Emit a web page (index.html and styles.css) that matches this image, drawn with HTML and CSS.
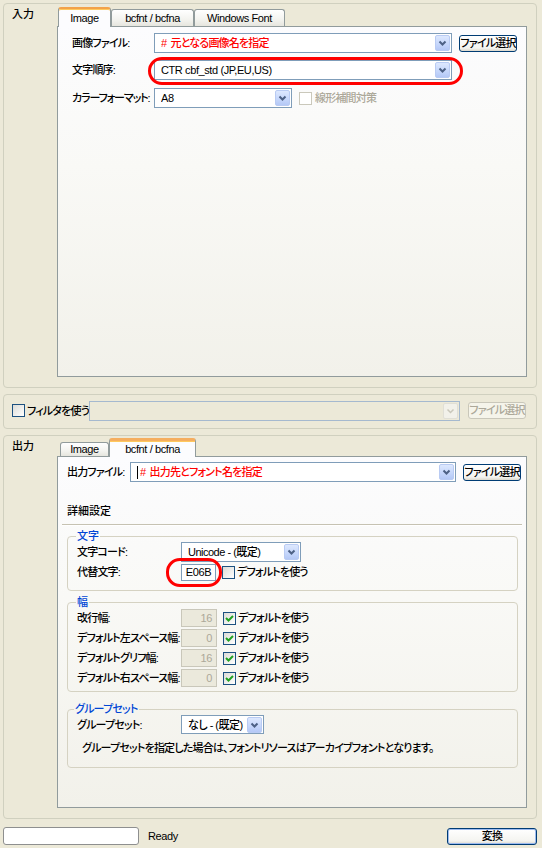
FILE: index.html
```html
<!DOCTYPE html>
<html lang="ja">
<head>
<meta charset="utf-8">
<title>Font Converter</title>
<link rel="stylesheet" href="styles.css">
</head>
<body>
<div class="app">
  <section class="box box-input">
    <div class="box-label">入力</div>
    <div class="tabctl">
      <div class="tabs tabs-in">
        <div class="tab active lat t-in-img">Image</div>
        <div class="tab lat t-in-bcf">bcfnt / bcfna</div>
        <div class="tab lat t-in-win">Windows Font</div>
      </div>
      <div class="panel panel-in">
        <div class="row r1">
          <span class="lbl lbl-in">画像ファイル:</span>
          <div class="combo cw-in"><span class="ct red"># 元となる画像名を指定</span><span class="cbtn"><svg viewBox="0 0 13 14" width="13" height="14"><path d="M3.5 5.5 L6.5 8.5 L9.5 5.5" fill="none" stroke="#4D6185" stroke-width="2"/></svg></span></div>
          <div class="btn">ファイル選択</div>
        </div>
        <div class="row r2">
          <span class="lbl lbl-in">文字順序:</span>
          <div class="ring-host">
            <div class="combo cw-in"><span class="ct lat">CTR cbf_std (JP,EU,US)</span><span class="cbtn"><svg viewBox="0 0 13 14" width="13" height="14"><path d="M3.5 5.5 L6.5 8.5 L9.5 5.5" fill="none" stroke="#4D6185" stroke-width="2"/></svg></span></div>
            <span class="ring ring-order"></span>
          </div>
        </div>
        <div class="row r3">
          <span class="lbl lbl-in lbl-tight">カラーフォーマット:</span>
          <div class="combo cw-fmt"><span class="ct lat">A8</span><span class="cbtn"><svg viewBox="0 0 13 14" width="13" height="14"><path d="M3.5 5.5 L6.5 8.5 L9.5 5.5" fill="none" stroke="#4D6185" stroke-width="2"/></svg></span></div>
          <span class="chk dis chk-lin"></span>
          <span class="dis-text">線形補間対策</span>
        </div>
      </div>
    </div>
  </section>

  <section class="box box-filter">
    <span class="chk"></span>
    <span class="filter-lbl">フィルタを使う</span>
    <div class="combo combo-dis cw-filter"><span class="ct"></span><span class="cbtn dis-btn"><svg viewBox="0 0 13 14" width="13" height="14"><path d="M3.5 5.5 L6.5 8.5 L9.5 5.5" fill="none" stroke="#C9C7BA" stroke-width="1.5"/></svg></span></div>
    <div class="btn btn-dis">ファイル選択</div>
  </section>

  <section class="box box-output">
    <div class="box-label">出力</div>
    <div class="tabctl">
      <div class="tabs tabs-out">
        <div class="tab lat t-out-img">Image</div>
        <div class="tab active lat t-out-bcf">bcfnt / bcfna</div>
      </div>
      <div class="panel panel-out">
        <div class="row">
          <span class="lbl lbl-out">出力ファイル:</span>
          <div class="combo cw-out"><span class="caret"></span><span class="ct red"># 出力先とフォント名を指定</span><span class="cbtn"><svg viewBox="0 0 13 14" width="13" height="14"><path d="M3.5 5.5 L6.5 8.5 L9.5 5.5" fill="none" stroke="#4D6185" stroke-width="2"/></svg></span></div>
          <div class="btn">ファイル選択</div>
        </div>
        <div class="heading">詳細設定</div>
        <div class="sep"></div>

        <fieldset class="grp grp-char">
          <legend>文字</legend>
          <div class="grow">
            <span class="glbl">文字コード:</span>
            <div class="combo cw-code"><span class="ct mix">Unicode - (既定)</span><span class="cbtn"><svg viewBox="0 0 13 14" width="13" height="14"><path d="M3.5 5.5 L6.5 8.5 L9.5 5.5" fill="none" stroke="#4D6185" stroke-width="2"/></svg></span></div>
          </div>
          <div class="grow">
            <span class="glbl">代替文字:</span>
            <div class="ring-host">
              <span class="tbox tbox-alt lat">E06B</span>
              <span class="ring ring-alt"></span>
            </div>
            <span class="chk chk-gap"></span>
            <span class="chk-text">デフォルトを使う</span>
          </div>
        </fieldset>

        <fieldset class="grp grp-width">
          <legend>幅</legend>
          <div class="grow">
            <span class="glbl">改行幅:</span>
            <span class="tbox tbox-dis lat">16</span>
            <span class="chk chk-gap checked"><svg viewBox="0 0 11 11" width="11" height="11"><path d="M2 5 L4.5 7.5 L9 3" fill="none" stroke="#21A121" stroke-width="2"/></svg></span>
            <span class="chk-text">デフォルトを使う</span>
          </div>
          <div class="grow">
            <span class="glbl">デフォルト左スペース幅:</span>
            <span class="tbox tbox-dis lat">0</span>
            <span class="chk chk-gap checked"><svg viewBox="0 0 11 11" width="11" height="11"><path d="M2 5 L4.5 7.5 L9 3" fill="none" stroke="#21A121" stroke-width="2"/></svg></span>
            <span class="chk-text">デフォルトを使う</span>
          </div>
          <div class="grow">
            <span class="glbl">デフォルトグリフ幅:</span>
            <span class="tbox tbox-dis lat">16</span>
            <span class="chk chk-gap checked"><svg viewBox="0 0 11 11" width="11" height="11"><path d="M2 5 L4.5 7.5 L9 3" fill="none" stroke="#21A121" stroke-width="2"/></svg></span>
            <span class="chk-text">デフォルトを使う</span>
          </div>
          <div class="grow">
            <span class="glbl">デフォルト右スペース幅:</span>
            <span class="tbox tbox-dis lat">0</span>
            <span class="chk chk-gap checked"><svg viewBox="0 0 11 11" width="11" height="11"><path d="M2 5 L4.5 7.5 L9 3" fill="none" stroke="#21A121" stroke-width="2"/></svg></span>
            <span class="chk-text">デフォルトを使う</span>
          </div>
        </fieldset>

        <fieldset class="grp grp-set">
          <legend>グループセット</legend>
          <div class="grow grow-set">
            <span class="glbl">グループセット:</span>
            <div class="combo cw-set"><span class="ct mix">なし - (既定)</span><span class="cbtn"><svg viewBox="0 0 13 14" width="13" height="14"><path d="M3.5 5.5 L6.5 8.5 L9.5 5.5" fill="none" stroke="#4D6185" stroke-width="2"/></svg></span></div>
          </div>
          <div class="note">グループセットを指定した場合は、フォントリソースはアーカイブフォントとなります。</div>
        </fieldset>
      </div>
    </div>
  </section>

  <footer class="status">
    <span class="progress"></span>
    <span class="ready lat">Ready</span>
    <div class="btn btn-default">変換</div>
  </footer>
</div>
</body>
</html>
```

FILE: styles.css
```css
* { box-sizing: border-box; }
html, body { margin: 0; padding: 0; }
body {
  width: 542px;
  height: 848px;
  overflow: hidden;
  background: #ECE9D8;
  font-family: "Liberation Sans", "Noto Sans CJK JP", sans-serif;
  font-size: 11px;
  font-weight: 500;
  line-height: 14px;
  color: #000;
  font-feature-settings: "palt";
  letter-spacing: -0.8px;
}
.lat { letter-spacing: -0.4px; }
.mix { letter-spacing: -0.5px; }
.app { padding: 3px 0 0 3px; width: 537px; }

/* group sections */
.box {
  width: 534px;
  border: 1px solid #D0D0BF;
  border-radius: 4px;
  display: flex;
}
.box-input { height: 385px; padding: 3px 9px 10px 0; }
.box-output { height: 384px; padding: 2px 9px 10px 0; margin-top: 6px; }
.box-label { width: 53px; flex: none; padding-left: 8px; letter-spacing: 0; }
.box-output .box-label { padding-top: 1px; }

/* tab control */
.tabctl { flex: 1; display: flex; flex-direction: column; min-width: 0; }
.tabs { display: flex; align-items: flex-end; position: relative; z-index: 2; }
.tabs-in { height: 19px; padding-left: 1px; }
.tabs-out { height: 18px; padding-left: 3px; }
.tab {
  height: 17px;
  border: 1px solid #919B9C;
  border-bottom: none;
  border-radius: 3px 3px 0 0;
  background: linear-gradient(#FFFFFF, #F3F3EF 60%, #E6E5DE);
  text-align: center;
  line-height: 15px;
  padding-top: 1px;
}
.tabs-out .tab { height: 14px; line-height: 13px; padding-top: 0; }
.tab.active {
  height: 20px;
  margin-bottom: -1px;
  background: #FCFCFE;
  border-top: 2px solid #F2A24A;
  box-shadow: inset 0 1px 0 #FFC95E;
  line-height: 16px;
}
.tabs-out .tab.active { height: 19px; line-height: 16px; padding-top: 0; border-top: 3px solid #F5AE60; }
.t-in-img { width: 53px; }
.t-in-bcf { width: 83px; }
.t-in-win { width: 91px; }
.t-out-img { width: 49px; }
.t-out-bcf { width: 87px; }

.panel {
  flex: 1;
  border: 1px solid #919B9C;
  background: linear-gradient(#FCFCFE, #F9F9F6 40%, #F2F1EA);
  position: relative;
  z-index: 1;
}
.panel-in { padding: 6px 8px 0 14px; }
.panel-out { padding: 5px 8px 0 9px; }

.row { display: flex; align-items: center; height: 20px; }
.r2 { margin-top: 7px; }
.r3 { margin-top: 8px; }
.lbl { flex: none; white-space: nowrap; overflow: hidden; }
.lbl-in { width: 82px; }
.lbl-out { width: 63px; }
.lbl-tight { letter-spacing: -1.1px; }

/* combo box */
.combo {
  flex: none;
  height: 20px;
  border: 1px solid #7F9DB9;
  background: #fff;
  display: flex;
  align-items: center;
  padding: 0 1px 0 6px;
}
.ct { flex: 1; white-space: nowrap; overflow: hidden; }
.red { color: #FF0000; word-spacing: 2px; }
.caret { width: 1px; height: 13px; background: #000; margin-right: 2px; flex: none; }
.cbtn {
  flex: none;
  width: 15px;
  height: 16px;
  border: 1px solid #B9CBF3;
  border-radius: 2px;
  background: linear-gradient(#DDE8FE, #C5D6FB 60%, #B4C8F6);
  display: flex;
  align-items: center;
  justify-content: center;
}
.cw-in { width: 298px; }
.cw-fmt { width: 138px; }
.cw-out { width: 326px; padding-left: 6px; }
.cw-code { width: 120px; }
.cw-set { width: 83px; height: 19px; }
.cw-filter { width: 371px; }
.combo-dis { background: #ECE9D8; border-color: #A5B9CF; }
.cbtn.dis-btn { background: #F2F1EA; border-color: #E0DFD6; }

/* buttons */
.btn {
  flex: none;
  width: 58px;
  height: 17px;
  margin-left: 7px;
  border: 1px solid #003C74;
  border-radius: 3px;
  background: linear-gradient(#FFFFFF, #F4F4F0 80%, #DCD8CC);
  text-align: center;
  line-height: 15px;
  white-space: nowrap;
}
.btn-dis { border-color: #C9C7BA; color: #ACA899; background: #F5F4EA; margin-left: 8px; }
.btn-default {
  width: 90px;
  margin-left: auto;
  box-shadow: inset 0 0 0 1px #9DBBF0;
}

/* checkbox */
.chk {
  flex: none;
  width: 13px;
  height: 13px;
  border: 1px solid #1C5180;
  background: linear-gradient(135deg, #DCDCD7, #FFFFFF);
  display: inline-flex;
  align-items: center;
  justify-content: center;
}
.chk.dis { border-color: #CAC8BB; background: #fff; }
.chk-lin { margin-left: 7px; }
.dis-text { color: #ACA899; margin-left: 3px; white-space: nowrap; }
.chk-gap { margin-left: 6px; }
.chk-text { margin-left: 2px; white-space: nowrap; }

/* filter box */
.box-filter { height: 35px; margin-top: 6px; align-items: center; padding: 0 10px 2px 8px; }
.filter-lbl { width: 64px; margin-left: 2px; white-space: nowrap; }

/* output details */
.heading { margin-top: 22px; line-height: 14px; letter-spacing: 0; }
.sep { height: 2px; margin: 6px -4px 0 -5px; border-top: 1px solid #C6C2B2; border-bottom: 1px solid #FFFFFF; }

.grp {
  margin: 0;
  border: 1px solid #D5D2C2;
  border-radius: 4px;
  padding: 0 9px 8px 9px;
  min-width: 0;
}
.grp legend {
  padding: 0 1px;
  line-height: 11px;
  color: #0046D5;
  margin-left: -1px;
}
.grp-char legend, .grp-width legend { letter-spacing: 0; }
.grp-char { margin-top: 5px; }
.grp-width { margin-top: 6px; padding-bottom: 3px; }
.grp-set { margin-top: 12px; padding-bottom: 12px; }
.grp-set legend { margin-left: -3px; }
.grow { display: flex; align-items: center; height: 20px; }
.grow-set { height: 19px; }
.glbl { width: 104px; flex: none; white-space: nowrap; }
.note { margin-top: 7px; padding-left: 5px; line-height: 14px; white-space: nowrap; }

/* text boxes */
.tbox {
  flex: none;
  display: inline-block;
  height: 18px;
  width: 36px;
  border: 1px solid #7F9DB9;
  background: #fff;
  line-height: 16px;
}
.tbox-alt { width: 35px; height: 17px; text-align: center; line-height: 15px; }
.tbox-dis {
  background: #EBE9DC;
  border-color: #C9C7BA;
  color: #ACA899;
  text-align: right;
  padding-right: 4px;
}

/* red highlight rings (overlay) */
.ring-host { position: relative; display: flex; flex: none; }
.ring {
  position: absolute;
  border: 3.5px solid #FF0000;
  border-radius: 14px;
  pointer-events: none;
}
.ring-order { left: -6px; right: -11px; top: -3px; bottom: -5px; }
.ring-alt { left: -15px; right: -6px; top: -6px; bottom: -6px; border-radius: 14px; }

/* status bar */
.status { display: flex; align-items: center; width: 534px; height: 18px; margin-top: 8px; }
.progress {
  width: 136px;
  height: 18px;
  border: 1px solid #8E8F8F;
  border-radius: 3px;
  background: #fff;
  flex: none;
}
.ready { margin-left: 9px; }
```
